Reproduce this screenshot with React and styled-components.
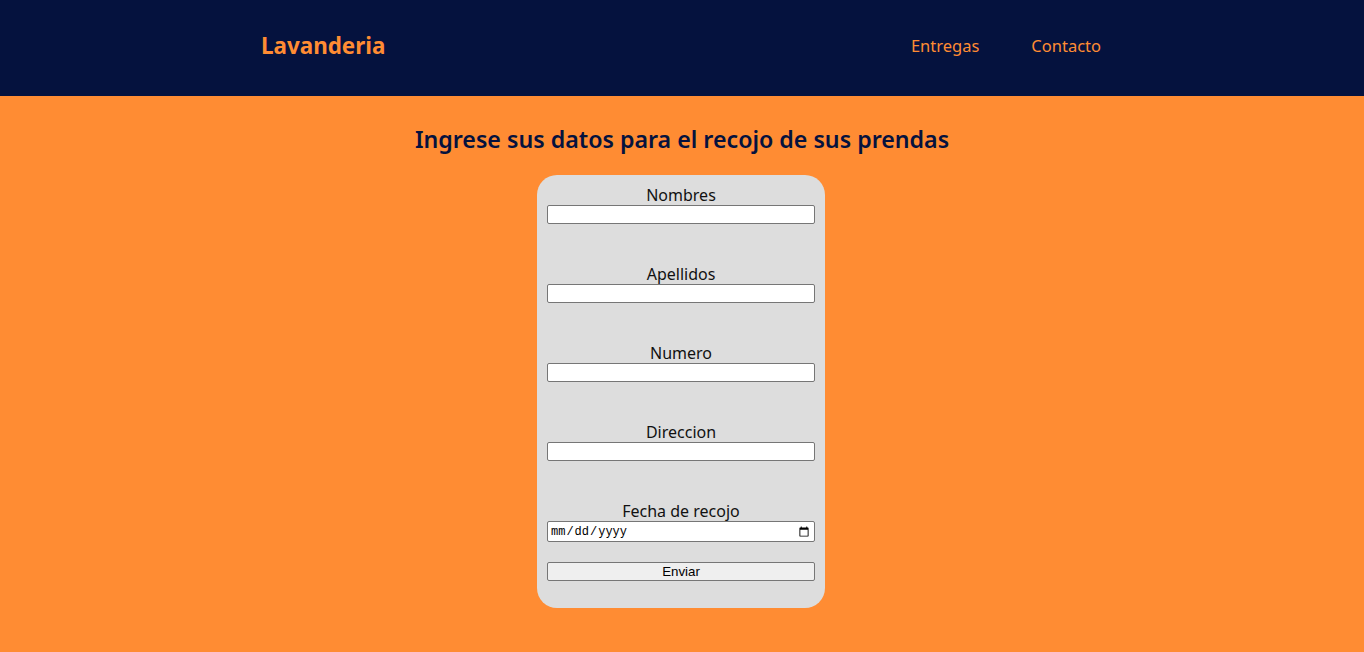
import React from "react";
import styled, { createGlobalStyle } from "styled-components";

const GlobalStyle = createGlobalStyle`
    body {
        margin: 0;
        background-color: #ff8c33;
        font-family: "Noto Sans", sans-serif;
    }
`;

const Header = styled.header`
    box-sizing: border-box;
    background-color: #05123e;
    height: 96px;
    padding-bottom: 5px;
    display: flex;
    align-items: center;
    justify-content: center;
`;

const HeaderInner = styled.div`
    width: 840px;
    margin-left: -2px;
    display: flex;
    justify-content: space-between;
    align-items: center;
`;

const Logo = styled.a`
    color: #ff8c33;
    font-size: 22.4px;
    font-weight: 700;
    text-decoration: none;
`;

const Nav = styled.nav`
    display: flex;
    gap: 52px;
`;

const NavLink = styled.a`
    color: #ff8c33;
    font-size: 16.5px;
    text-decoration: none;
`;

const Main = styled.main`
    display: flex;
    flex-direction: column;
    align-items: center;
    padding-top: 27px;
    padding-bottom: 44px;
`;

const Title = styled.h2`
    margin: 0 0 20px;
    color: #05123e;
    font-size: 23.2px;
    font-weight: 600;
    line-height: 32px;
`;

const Form = styled.form`
    width: 268px;
    background-color: #dddddd;
    border-radius: 20px;
    padding: 10px 10px 27px;
    display: flex;
    flex-direction: column;
    transform: translateX(-1px);
`;

const Field = styled.div`
    display: flex;
    flex-direction: column;
    margin-bottom: ${(p) => (p.last ? "20px" : "40px")};
`;

const Label = styled.label`
    text-align: center;
    color: #111;
    font-size: 16px;
    line-height: 20px;
`;

const Input = styled.input`
    box-sizing: border-box;
    width: 100%;
    height: ${(p) => (p.type === "date" ? "21px" : "19px")};
    margin: 0;
    border: 1px solid #767676;
    border-radius: 2px;
    background: #fff;
    font-family: "Liberation Mono", monospace;
    font-size: 12px;
    padding: 0 2px;
`;

const SubmitButton = styled.button`
    box-sizing: border-box;
    width: 100%;
    height: 19px;
    margin: 0;
    padding: 0;
    border: 1px solid #767676;
    border-radius: 2px;
    background-color: #efefef;
    font-family: "Liberation Sans", Arial, sans-serif;
    font-size: 13.3px;
    color: #000;
    line-height: 17px;
`;

const fields = [
    { id: "nombres", label: "Nombres", type: "text" },
    { id: "apellidos", label: "Apellidos", type: "text" },
    { id: "numero", label: "Numero", type: "text" },
    { id: "direccion", label: "Direccion", type: "text" },
    { id: "fecha", label: "Fecha de recojo", type: "date" },
];

const App = () => {
    return (
        <>
            <GlobalStyle />
            <Header>
                <HeaderInner>
                    <Logo href="#">Lavanderia</Logo>
                    <Nav>
                        <NavLink href="#">Entregas</NavLink>
                        <NavLink href="#">Contacto</NavLink>
                    </Nav>
                </HeaderInner>
            </Header>
            <Main>
                <Title>Ingrese sus datos para el recojo de sus prendas</Title>
                <Form onSubmit={(e) => e.preventDefault()}>
                    {fields.map((f, i) => (
                        <Field key={f.id} last={i === fields.length - 1}>
                            <Label htmlFor={f.id}>{f.label}</Label>
                            <Input type={f.type} id={f.id} name={f.id} />
                        </Field>
                    ))}
                    <SubmitButton type="submit">Enviar</SubmitButton>
                </Form>
            </Main>
        </>
    );
};

export default App;
